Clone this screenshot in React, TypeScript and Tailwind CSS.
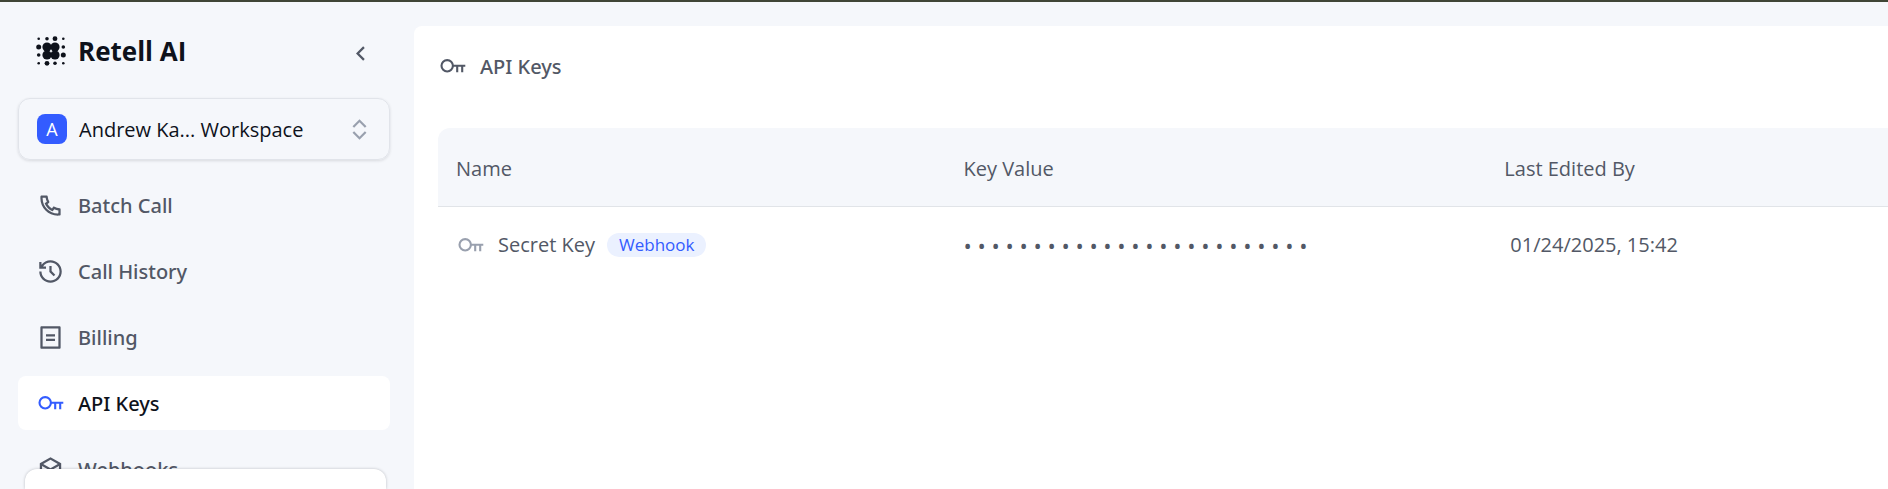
import type { ComponentType } from "react";
import {
  RiArrowLeftSLine,
  RiBillLine,
  RiBox3Line,
  RiExpandUpDownLine,
  RiHistoryLine,
  RiPhoneLine,
} from "react-icons/ri";

type IconProps = { className?: string };

function KeyIcon({ className = "" }: IconProps) {
  return (
    <svg viewBox="0 0 27 27" fill="none" stroke="currentColor" strokeWidth="2.1" className={className} aria-hidden="true">
      <circle cx="8.2" cy="12.8" r="5.7" />
      <path d="M13.7 12.7H26.3M18.2 12.7V19.2M23.2 12.7V19.2" />
    </svg>
  );
}

const LOGO_STOPS = [2.7, 11, 19, 27.3];
const LOGO_RADII = [
  [1.3, 1.8, 2.4, 1.3],
  [2.5, 4.6, 4.6, 1.8],
  [1.8, 4.6, 4.6, 2.5],
  [1.3, 2.4, 1.8, 1.3],
];

function Logo({ className = "" }: IconProps) {
  return (
    <svg viewBox="0 0 30 30" fill="currentColor" className={className} aria-hidden="true">
      {LOGO_RADII.map((row, y) =>
        row.map((r, x) => <circle key={`${x}-${y}`} cx={LOGO_STOPS[x]} cy={LOGO_STOPS[y]} r={r} />),
      )}
    </svg>
  );
}

const NAV: { label: string; icon: ComponentType<IconProps>; active?: boolean }[] = [
  { label: "Batch Call", icon: RiPhoneLine },
  { label: "Call History", icon: RiHistoryLine },
  { label: "Billing", icon: RiBillLine },
  { label: "API Keys", icon: KeyIcon, active: true },
  { label: "Webhooks", icon: RiBox3Line },
];

function Sidebar() {
  return (
    <aside className="flex w-[414px] shrink-0 flex-col pr-6 pl-[18px]">
      <div className="flex items-center px-4 pt-[33px] pb-[31px] pl-[18px]">
        <Logo className="size-[30px] text-[#0e121b]" />
        <span className="ml-3 text-[26px] leading-8 font-bold text-[#0e121b]">Retell AI</span>
        <button type="button" aria-label="Collapse sidebar" className="ml-auto pt-1 text-[#525866]">
          <RiArrowLeftSLine className="size-[27px]" />
        </button>
      </div>
      <button
        type="button"
        className="flex h-[62px] shrink-0 items-center rounded-xl border border-[#e1e4ea] pr-4 pl-[18px] shadow-[0_1px_3px_rgba(14,18,27,0.12)]"
      >
        <span className="flex size-[30px] items-center justify-center rounded-lg bg-[#335cff] text-lg text-white">A</span>
        <span className="ml-3 pt-0.5 text-xl text-[#0e121b]">Andrew Ka... Workspace</span>
        <RiExpandUpDownLine className="ml-auto size-[27px] text-[#99a0ae]" />
      </button>
      <nav className="mt-[18px] flex min-h-0 flex-1 flex-col gap-3 overflow-hidden">
        {NAV.map(({ label, icon: Icon, active }) => (
          <a
            key={label}
            href="#"
            className={`flex h-[54px] shrink-0 items-center gap-[14px] rounded-lg pl-[19px] font-['Noto_Sans',sans-serif] text-xl font-medium ${
              active ? "bg-white text-[#0e121b]" : "text-[#525866]"
            }`}
          >
            <Icon className={`size-[27px] ${active ? "text-[#335cff]" : ""}`} />
            <span className="pt-0.5">{label}</span>
          </a>
        ))}
      </nav>
      <div className="mr-1 ml-[7px] h-5 shrink-0 rounded-t-xl bg-white shadow-[0_0_3px_rgba(14,18,27,0.25)]" />
    </aside>
  );
}

function KeysTable() {
  return (
    <table className="w-full table-fixed border-separate border-spacing-0 text-left text-xl text-[#525866]">
      <thead>
        <tr className="h-[79px] bg-[#f5f7fb]">
          <th className="w-[35%] rounded-tl-xl border-b border-[#e1e4e8] pt-1 pl-[18px] font-normal">Name</th>
          <th className="w-[37.3%] border-b border-[#e1e4e8] pt-1 pl-[18px] font-normal">Key Value</th>
          <th className="border-b border-[#e1e4e8] pt-1 pl-[18px] font-normal">Last Edited By</th>
        </tr>
      </thead>
      <tbody>
        <tr className="h-[76px]">
          <td className="pl-[19px]">
            <div className="flex items-center">
              <KeyIcon className="size-[27px] text-[#99a0ae]" />
              <span className="ml-[14px]">Secret Key</span>
              <span className="ml-3 rounded-full bg-[#ebf1ff] px-3 text-[17px] leading-6 text-[#335cff]">Webhook</span>
            </div>
          </td>
          <td className="pl-[18px] text-[22px] whitespace-nowrap">{Array(25).fill("•").join(" ")}</td>
          <td className="pl-6">01/24/2025, 15:42</td>
        </tr>
      </tbody>
    </table>
  );
}

export default function App() {
  return (
    <div className="flex h-screen overflow-hidden border-t-2 border-[#3f4536] bg-[#f5f7fb] font-['Open_Sans','Noto_Sans',sans-serif]">
      <Sidebar />
      <main className="mt-6 min-w-0 flex-1 rounded-tl-lg bg-white pl-6">
        <h1 className="flex h-20 items-center gap-[14px] pl-px font-['Noto_Sans',sans-serif] text-xl font-medium text-[#525866]">
          <KeyIcon className="size-[27px]" />
          <span className="pt-0.5">API Keys</span>
        </h1>
        <div className="mt-[22px]">
          <KeysTable />
        </div>
      </main>
    </div>
  );
}
